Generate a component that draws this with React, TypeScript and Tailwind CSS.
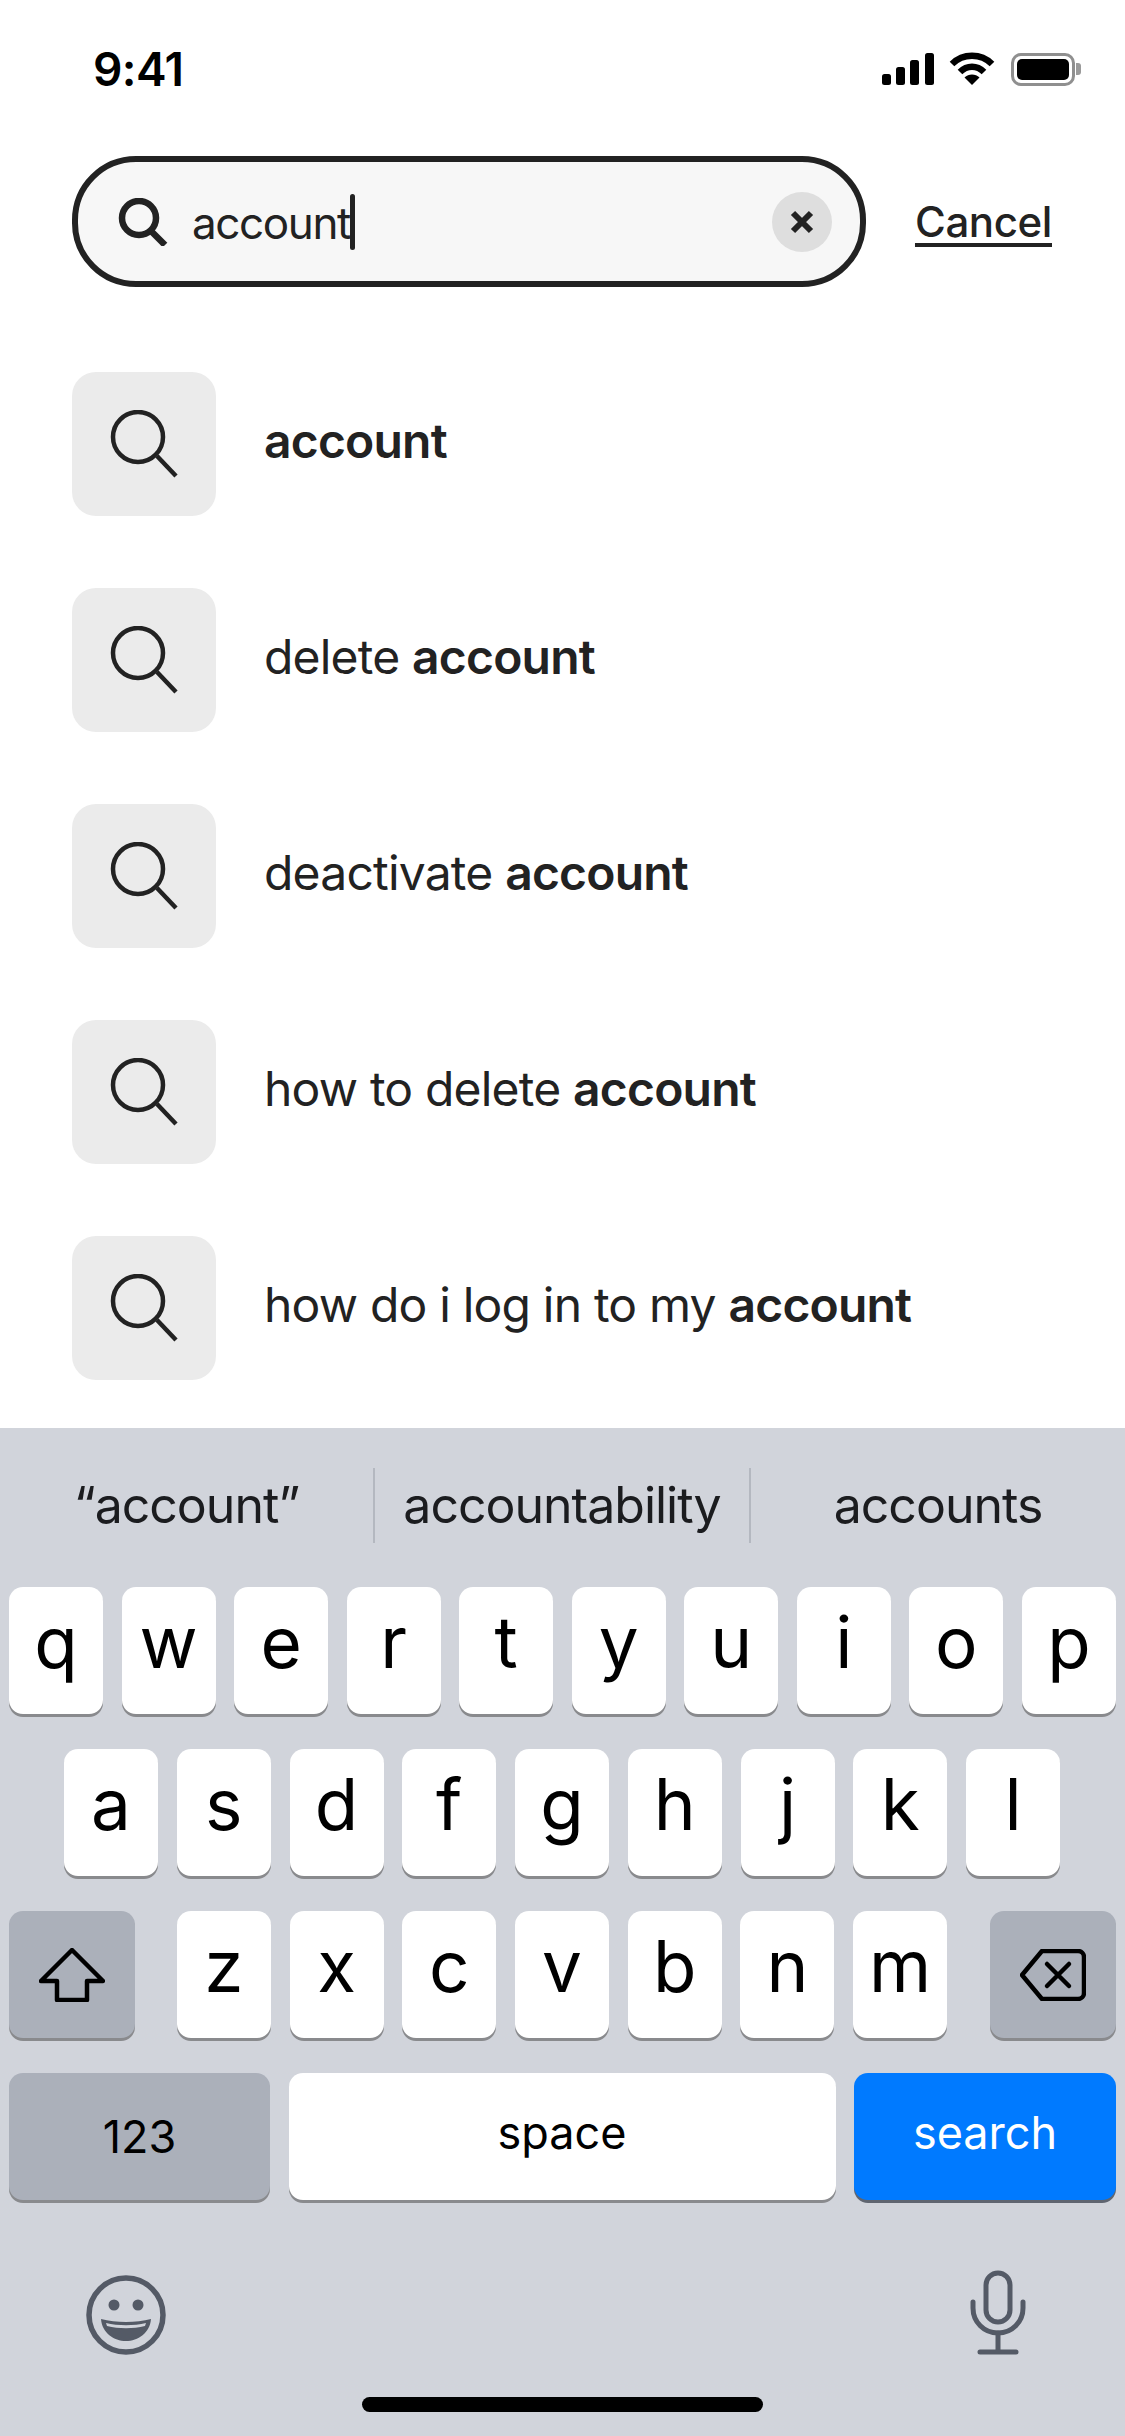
const suggestions = [
  { plain: "", bold: "account" },
  { plain: "delete ", bold: "account" },
  { plain: "deactivate ", bold: "account" },
  { plain: "how to delete ", bold: "account" },
  { plain: "how do i log in to my ", bold: "account" },
];

const Key = ({ label }: { label: string }) => (
  <div className="flex h-[127px] w-[94px] items-center justify-center rounded-[14px] bg-white pb-[17px] text-[71px] leading-none text-black shadow-[0_3px_0_#898a8d]">
    {label}
  </div>
);

const SearchGlyph = () => (
  <svg viewBox="0 0 68 68" className="h-[68px] w-[68px]" fill="none" stroke="#222222" strokeWidth="4.5">
    <circle cx="28" cy="27" r="25" />
    <path d="M47 46 L66 66" strokeLinecap="butt" />
  </svg>
);

const StatusIcons = () => (
  <div className="flex items-center">
    <svg viewBox="0 0 52 32" className="h-[32px] w-[52px]" fill="#000">
      <rect x="0" y="21" width="9" height="11" rx="2.5" />
      <rect x="14" y="14" width="9" height="18" rx="2.5" />
      <rect x="28" y="7" width="9" height="25" rx="2.5" />
      <rect x="43" y="0" width="9" height="32" rx="2.5" />
    </svg>
    <svg viewBox="0 0 46 34" className="ml-[15px] h-[34px] w-[46px]" fill="none" stroke="#000" strokeWidth="6.5">
      <path d="M3 12 C14 1 32 1 43 12" />
      <path d="M11 20 C18 13 28 13 35 20" />
      <path d="M23 33 L15.5 25.5 C19.5 21.5 26.5 21.5 30.5 25.5 Z" fill="#000" stroke="none" />
    </svg>
    <div className="ml-[16px] flex items-center">
      <div className="flex h-[33px] w-[64px] items-center justify-center rounded-[10px] border-[3px] border-[#8f8f8f] p-[3px]">
        <div className="h-full w-full rounded-[5px] bg-black" />
      </div>
      <div className="ml-[1px] h-[12px] w-[5px] rounded-r-[3px] bg-[#9a9a9a]" />
    </div>
  </div>
);

export default function App() {
  return (
    <div className="flex h-[2436px] w-[1125px] flex-col overflow-hidden bg-white font-['Inter',sans-serif] text-[#222222]">
      <div className="flex h-[138px] items-center justify-between pl-[93px] pr-[44px]">
        <span className="text-[46px] font-semibold tracking-[-0.6px] text-black">9:41</span>
        <StatusIcons />
      </div>

      <div className="mt-[18px] flex items-center justify-between pl-[72px] pr-[73px]">
        <div className="flex h-[131px] w-[794px] shrink-0 items-center rounded-[64px] border-[6px] border-[#222222] bg-[#f7f7f7] pl-[40px] pr-[28px]">
          <svg viewBox="0 0 50 48" className="h-[48px] w-[50px]" fill="none" stroke="#222222" strokeWidth="6.5">
            <circle cx="21" cy="20" r="17" />
            <path d="M32 32 L47 47" />
          </svg>
          <span className="ml-[24px] pt-[2px] text-[44px] leading-none tracking-[-1.4px]">account</span>
          <div className="h-[56px] w-[5px] rounded-full bg-[#222222]" />
          <div className="ml-auto flex h-[60px] w-[60px] items-center justify-center rounded-full bg-[#dedede]">
            <svg viewBox="0 0 24 24" className="h-[24px] w-[24px]" fill="none" stroke="#222222" strokeWidth="6">
              <path d="M3 3 L21 21 M21 3 L3 21" />
            </svg>
          </div>
        </div>
        <span className="text-[42px] font-medium tracking-[-0.4px] underline decoration-[4px] underline-offset-[6px]">Cancel</span>
      </div>

      <div className="mt-[85px] flex flex-col gap-[72px] px-[72px]">
        {suggestions.map((item) => (
          <div key={item.plain + item.bold} className="flex items-center">
            <div className="flex h-[144px] w-[144px] items-center justify-center rounded-[24px] bg-[#ebebeb]">
              <SearchGlyph />
            </div>
            <span className="ml-[48px] pb-[6px] text-[48px] tracking-[-0.8px]">
              {item.plain}
              <span className="font-semibold">{item.bold}</span>
            </span>
          </div>
        ))}
      </div>

      <div className="mt-auto flex h-[1008px] flex-col bg-[#d1d4db]">
        <div className="flex h-[159px] items-center pb-[5px] text-[50px] tracking-[-1px] text-[#1b1c1f]">
          <div className="flex w-[373px] justify-center">“account”</div>
          <div className="h-[75px] w-[2px] bg-[#b4b8c0]" />
          <div className="flex w-[374px] justify-center">accountability</div>
          <div className="h-[75px] w-[2px] bg-[#b4b8c0]" />
          <div className="flex flex-1 justify-center">accounts</div>
        </div>

        <div className="flex flex-col gap-[35px] px-[9px]">
          <div className="flex justify-between">
            {"qwertyuiop".split("").map((c) => (
              <Key key={c} label={c} />
            ))}
          </div>
          <div className="flex justify-center gap-[18.75px] pr-[1px]">
            {"asdfghjkl".split("").map((c) => (
              <Key key={c} label={c} />
            ))}
          </div>
          <div className="flex justify-between">
            <div className="flex h-[127px] w-[126px] items-center justify-center rounded-[14px] bg-[#abb0ba] shadow-[0_3px_0_#898a8d]">
              <svg viewBox="0 0 66 54" className="h-[54px] w-[66px]" fill="none" stroke="#000" strokeWidth="4.5" strokeLinejoin="round">
                <path d="M33 2 L64 33 H48 V52 H18 V33 H2 Z" />
              </svg>
            </div>
            <div className="mr-[1px] flex gap-[18.7px]">
              {"zxcvbnm".split("").map((c) => (
                <Key key={c} label={c} />
              ))}
            </div>
            <div className="flex h-[127px] w-[126px] items-center justify-center rounded-[14px] bg-[#abb0ba] shadow-[0_3px_0_#898a8d]">
              <svg viewBox="0 0 66 52" className="h-[52px] w-[66px]" fill="none" stroke="#000" strokeWidth="4.5" strokeLinejoin="round" strokeLinecap="round">
                <path d="M22 2 H58 A6 6 0 0 1 64 8 V44 A6 6 0 0 1 58 50 H22 L2 26 Z" />
                <path d="M27 15 L49 37 M49 15 L27 37" />
              </svg>
            </div>
          </div>
          <div className="flex justify-between">
            <div className="flex h-[127px] w-[261px] items-center justify-center rounded-[14px] bg-[#abb0ba] text-[45px] text-black shadow-[0_3px_0_#898a8d]">
              123
            </div>
            <div className="flex h-[127px] w-[547px] items-center justify-center rounded-[14px] bg-white pb-[8px] text-[45px] text-black shadow-[0_3px_0_#898a8d]">
              space
            </div>
            <div className="flex h-[127px] w-[262px] items-center justify-center rounded-[14px] bg-[#007aff] pb-[8px] text-[45px] text-white shadow-[0_3px_0_#5f6570]">
              search
            </div>
          </div>
        </div>

        <div className="mt-[70px] flex h-[85px] items-end justify-between pl-[86px] pr-[99px]">
          <svg viewBox="0 0 80 80" className="h-[80px] w-[80px]" fill="none">
            <circle cx="40" cy="40" r="37" stroke="#545a66" strokeWidth="5.5" />
            <circle cx="28" cy="30" r="5.5" fill="#545a66" />
            <circle cx="52" cy="30" r="5.5" fill="#545a66" />
            <path d="M15 44 C30 48 50 48 65 44 C64 58 52 66 40 66 C28 66 16 58 15 44 Z" fill="#545a66" />
            <path d="M20 48 C32 51 48 51 60 48 L59 51 C47 54 33 54 21 51 Z" fill="#d1d4db" />
          </svg>
          <svg viewBox="0 0 56 85" className="h-[85px] w-[56px]" fill="none" stroke="#545a66" strokeWidth="5" strokeLinecap="round">
            <rect x="16" y="3" width="24" height="49" rx="12" />
            <path d="M3 32 V38 C3 52 14 63 28 63 C42 63 53 52 53 38 V32" />
            <path d="M28 63 V82 M10 82 H46" />
          </svg>
        </div>

        <div className="mx-auto mt-[42px] h-[15px] w-[401px] rounded-full bg-black" />
      </div>
    </div>
  );
}
